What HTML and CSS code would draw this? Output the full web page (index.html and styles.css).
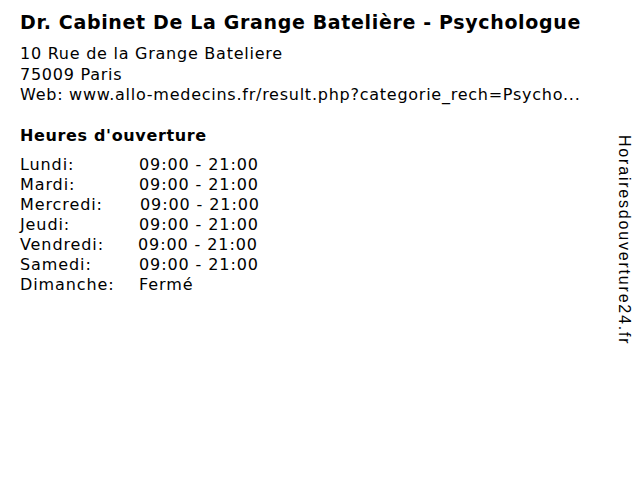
FILE: index.html
```html
<!DOCTYPE html>
<html lang="fr">
<head>
<meta charset="utf-8">
<title>Dr. Cabinet De La Grange Batelière - Psychologue</title>
<link rel="stylesheet" href="styles.css">
</head>
<body>
<div class="page">
  <main class="main">
    <h1 class="title">Dr. Cabinet De La Grange Batelière - Psychologue</h1>
    <div class="address">
      <div>10 Rue de la Grange Bateliere</div>
      <div>75009 Paris</div>
      <div>Web: www.allo-medecins.fr/result.php?categorie_rech=Psycho...</div>
    </div>
    <h2 class="hours-title">Heures d'ouverture</h2>
    <div class="hours">
      <span>Lundi:</span><span>09:00 - 21:00</span>
      <span>Mardi:</span><span>09:00 - 21:00</span>
      <span>Mercredi:</span><span class="right1">09:00 - 21:00</span>
      <span>Jeudi:</span><span>09:00 - 21:00</span>
      <span>Vendredi:</span><span class="left1">09:00 - 21:00</span>
      <span>Samedi:</span><span>09:00 - 21:00</span>
      <span>Dimanche:</span><span>Fermé</span>
    </div>
  </main>
  <aside class="side">Horairesdouverture24.fr</aside>
</div>
</body>
</html>
```
FILE: styles.css
```css
html, body {
  margin: 0;
  padding: 0;
  background: #fff;
}
body {
  font-family: "DejaVu Sans", Verdana, sans-serif;
  color: #000;
}
.page {
  display: flex;
  width: 640px;
  height: 480px;
  box-sizing: border-box;
  padding: 10px 6px 0 20px;
}
.main {
  flex: 1;
}
.title {
  font-size: 19px;
  font-weight: bold;
  letter-spacing: 0.65px;
  margin: 0;
  line-height: 24px;
  white-space: nowrap;
}
.address {
  margin-top: 10px;
  font-size: 16px;
  line-height: 20.5px;
  letter-spacing: 0.75px;
  white-space: nowrap;
}
.hours-title {
  font-size: 16px;
  font-weight: bold;
  letter-spacing: 0.65px;
  margin: 20px 0 0;
  line-height: 20px;
}
.hours {
  margin-top: 9px;
  display: grid;
  grid-template-columns: 119px auto;
  font-size: 16px;
  line-height: 20px;
  letter-spacing: 0.9px;
}
.right1 {
  padding-left: 1px;
}
.left1 {
  margin-left: -1px;
}
.side {
  writing-mode: vertical-rl;
  font-family: "Liberation Sans", Arial, sans-serif;
  font-size: 16px;
  letter-spacing: 1.8px;
  margin-top: 125px;
  line-height: 20px;
}
```
